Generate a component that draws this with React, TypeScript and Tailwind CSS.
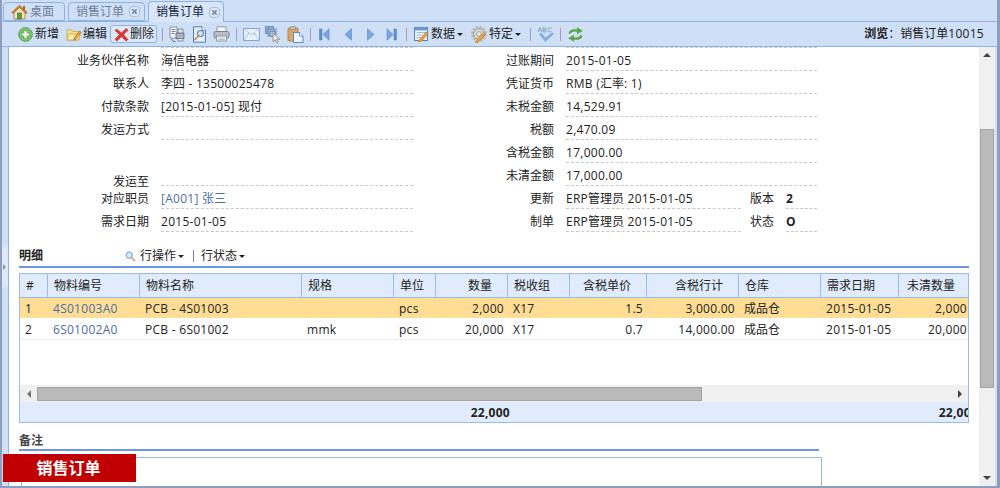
import React from "react";

const font = { fontFamily: '"Open Sans","Noto Sans CJK SC",sans-serif' };

const T = ({ v }: { v: string }) => (
  <>
    {v.split(/([\u4e00-\u9fff：]+)/).map((p, i) =>
      i % 2 === 1 ? <span key={i}>{p}</span> : <span key={i} className="tracking-[0.27px]">{p}</span>
    )}
  </>
);

const Home = () => (
  <svg width="17" height="16" viewBox="0 0 17 16" className="mr-[2px] shrink-0">
    <path d="M3 8v7h11V8L8.5 3z" fill="#f3e3b8" stroke="#a8763a" strokeWidth="0.8" />
    <rect x="6.5" y="9" width="4" height="6" fill="#5f9a3c" stroke="#3d7326" strokeWidth="0.6" />
    <path d="M0.8 8.5 8.5 1.2l7.7 7.3-1.2 1-6.5-6-6.5 6z" fill="#d9832c" stroke="#96561b" strokeWidth="0.6" />
    <rect x="12" y="2" width="2" height="4" fill="#b06a26" />
  </svg>
);
const Close = () => (
  <svg width="11" height="11" viewBox="0 0 11 11" className="shrink-0">
    <rect x="0.5" y="0.5" width="10" height="10" rx="3" fill="#dbe6f6" stroke="#a7bbd9" />
    <path d="M3.3 3.3l4.4 4.4M7.700 3.300 3.300 7.700" stroke="#71859f" strokeWidth="1.600" />
  </svg>
);
const Add = () => (
  <svg width="15" height="15" viewBox="0 0 15 15" className="shrink-0">
    <circle cx="7.5" cy="7.5" r="6.8" fill="#8cc97c" stroke="#4f9a44" />
    <circle cx="7.5" cy="7.5" r="5" fill="#6fb665" />
    <path d="M7.5 4v7M4 7.5h7" stroke="#fff" strokeWidth="2.2" />
  </svg>
);
const Edit = () => (
  <svg width="16" height="15" viewBox="0 0 16 15" className="shrink-0">
    <path d="M1 3h5l1 1.5h6V13H1z" fill="#f5e08e" stroke="#c9a548" strokeWidth="0.8" />
    <path d="M1 13l2-6h11.5L12.500 13z" fill="#fbeeb0" stroke="#c9a548" strokeWidth="0.8" />
    <path d="M8 11l5.500-7 1.700 1.300L9.800 12.300 7.700 13z" fill="#e89a3c" stroke="#a86a20" strokeWidth="0.6" />
  </svg>
);
const Del = () => (
  <svg width="15" height="15" viewBox="0 0 15 15" className="shrink-0">
    <path d="M2.500 2 7.500 6 12 1.500l2 1.500-4.500 4.700L14 12.500 12 14 7.500 9.500 3 14l-2-1.800 4.500-4.700L1 3.500z" fill="#e2352e" stroke="#c7241f" strokeWidth="0.6" strokeLinejoin="round" />
  </svg>
);
const Export = () => (
  <svg width="17" height="17" viewBox="0 0 17 17" className="shrink-0">
    <path d="M1 1h7v11H1z" fill="#f3f6fb" stroke="#6f7a8c" strokeWidth="0.8" />
    <path d="M2.500 3.500h4M2.500 5.500h4M2.500 7.500h3" stroke="#5b6778" strokeWidth="0.8" />
    <path d="M7 7h8v5.500H7z" fill="#aab3c0" stroke="#606a78" strokeWidth="0.8" />
    <path d="M9 3h5v4H9z" fill="#dde2ea" stroke="#6f7a8c" strokeWidth="0.8" />
    <path d="M9 12.500h5v2.500H9z" fill="#eef1f5" stroke="#6f7a8c" strokeWidth="0.8" />
    <path d="M2.500 13c.5 2 2 2.800 4 2.500" fill="none" stroke="#4c6fa0" strokeWidth="1" />
  </svg>
);
const Preview = () => (
  <svg width="15" height="17" viewBox="0 0 15 17" className="shrink-0">
    <path d="M1.500 .8h8.500l3.500 3.500v11.900h-12z" fill="#e4eefb" stroke="#4f7fc0" />
    <path d="M10 .8v3.500h3.500" fill="#fff" stroke="#4f7fc0" strokeWidth="0.8" />
    <circle cx="8.500" cy="7.500" r="3" fill="#cfe5fb" stroke="#6d7f92" strokeWidth="1.100" />
    <path d="M6.300 10 2.500 14" stroke="#d98a2a" strokeWidth="1.800" />
  </svg>
);
const Printer = () => (
  <svg width="17" height="16" viewBox="0 0 17 16" className="shrink-0">
    <path d="M4 .8h9v5H4z" fill="#f4f6fa" stroke="#7e8896" strokeWidth="0.8" />
    <rect x="1" y="5.500" width="15" height="6.500" rx="1.500" fill="#b7bec9" stroke="#6b7482" strokeWidth="0.8" />
    <path d="M3.500 10h10v5h-10z" fill="#f4f6fa" stroke="#7e8896" strokeWidth="0.8" />
    <path d="M5 12h7M5 13.500h7" stroke="#a5adb8" strokeWidth="0.7" />
  </svg>
);
const Mail = () => (
  <svg width="17" height="13" viewBox="0 0 17 13" className="shrink-0">
    <rect x="0.500" y="0.500" width="16" height="12" fill="#e9f1fc" stroke="#7ea6dc" />
    <path d="M.5.500 8.500 7l8-6.500M.5 12.500l5.500-7.500M16.500 12.500 11 5" fill="none" stroke="#a3c1ea" />
  </svg>
);
const Windows = () => (
  <svg width="16" height="17" viewBox="0 0 16 17" className="shrink-0">
    <rect x="0.500" y="0.500" width="8" height="7" fill="#8fa9cf" stroke="#7390bb" />
    <rect x="3" y="3" width="8" height="7" fill="#9db5d8" stroke="#7390bb" />
    <rect x="5" y="5.500" width="5" height="5" fill="#aac0df" stroke="#7390bb" />
    <path d="M8 7v9l2.200-2.200 1.500 3 1.500-.7-1.500-2.900H15z" fill="#ececec" stroke="#858585" strokeWidth="0.800" strokeLinejoin="round" />
  </svg>
);
const Paste = () => (
  <svg width="17" height="17" viewBox="0 0 17 17" className="shrink-0">
    <rect x="1" y="2" width="10" height="13" rx="1" fill="#dca766" stroke="#a9742f" strokeWidth="0.800" />
    <rect x="3.500" y="0.600" width="5" height="3" rx="0.800" fill="#c9c9c9" stroke="#7e7e7e" strokeWidth="0.700" />
    <path d="M6.500 6.500h6l3.500 3.500v6.500H6.500z" fill="#eef4fd" stroke="#4f7fc0" strokeWidth="0.900" />
    <path d="M12.500 6.500V10H16" fill="#fff" stroke="#4f7fc0" strokeWidth="0.800" />
  </svg>
);
const Nav = ({ dir, bar }: { dir: "l" | "r"; bar?: boolean }) => (
  <svg width="11" height="13" viewBox="0 0 11 13" className="shrink-0">
    {dir === "l" ? (
      <>
        {bar && <rect x="0.500" y="1" width="2.500" height="11" fill="#5f8fd0" stroke="#4d7cbc" strokeWidth="0.500" />}
        <path d={bar ? "M10 .8v11.400L4 6.500z" : "M8.500.8v11.400L2 6.500z"} fill="#7ba6df" stroke="#5d8ccb" strokeWidth="0.700" />
      </>
    ) : (
      <>
        {bar && <rect x="8" y="1" width="2.500" height="11" fill="#5f8fd0" stroke="#4d7cbc" strokeWidth="0.500" />}
        <path d={bar ? "M1 .8v11.400L7 6.500z" : "M2.500.8v11.400L9 6.500z"} fill="#7ba6df" stroke="#5d8ccb" strokeWidth="0.700" />
      </>
    )}
  </svg>
);
const DataIcon = () => (
  <svg width="15" height="15" viewBox="0 0 15 15" className="shrink-0">
    <rect x="0.500" y="0.500" width="13" height="13" fill="#f2f6fc" stroke="#4f7fc0" />
    <rect x="0.500" y="0.500" width="13" height="3" fill="#6f9bd6" />
    <path d="M2.500 5.500h9M2.500 8h5M2.500 10.500h4" stroke="#9db9df" />
    <path d="M5 13l7-8 2 1.700-7 8-3 .5z" fill="#efa13c" stroke="#b06f1f" strokeWidth="0.600" />
  </svg>
);
const Gear = () => (
  <svg width="17" height="17" viewBox="0 0 17 17" className="shrink-0">
    <circle cx="8" cy="8" r="5.500" fill="#d6d6d2" stroke="#9b9b92" />
    <circle cx="8" cy="8" r="7" fill="none" stroke="#b4b4ac" strokeWidth="2" strokeDasharray="2.200 1.500" />
    <circle cx="8" cy="8" r="2.300" fill="#eeeeea" stroke="#9b9b92" strokeWidth="0.800" />
    <path d="M5 15l7.500-8.500 2 1.700L7 16.500l-2.500.5z" fill="#efa83f" stroke="#b06f1f" strokeWidth="0.600" />
  </svg>
);
const Abc = () => (
  <svg width="17" height="15" viewBox="0 0 17 15" className="shrink-0">
    <path d="M1 5l2-4.500L5 5M1.700 3.500h2.600M6 .7h2c1.500 0 1.500 2-.2 2H6zm0 2h2.200c1.600 0 1.600 2.300 0 2.300H6zM14.500 1.300c-2-1.300-3.600 0-3.600 1.500s1.600 2.800 3.600 1.500" fill="none" stroke="#7fa6c9" strokeWidth="0.900" />
    <path d="M2.500 7l2-.8 3.700 5L15 5.800l1.500 1L8.300 14.500z" fill="#7fb3e6" stroke="#5d93cc" strokeWidth="0.500" />
  </svg>
);
const Refresh = () => (
  <svg width="17" height="15" viewBox="0 0 17 15" className="shrink-0">
    <path d="M2.500 6.500C3.500 3.800 6.800 3 10.500 3.600" fill="none" stroke="#58a846" strokeWidth="2.400" />
    <path d="M10 .2 15.800 3.800 10 7.200z" fill="#58a846" />
    <path d="M14.500 8.500c-1 2.700-4.300 3.500-8 2.900" fill="none" stroke="#58a846" strokeWidth="2.400" />
    <path d="M7 14.800 1.200 11.200 7 7.800z" fill="#58a846" />
  </svg>
);
const Caret = ({ className = "" }: { className?: string }) => (
  <span className={`inline-block w-0 h-0 border-x-[3px] border-x-transparent border-t-[3px] border-t-[#222] ${className}`} />
);
const Sep = ({ className = "" }: { className?: string }) => <span className={`w-px h-[13px] bg-[#a899c4] shrink-0 ${className}`} />;

const Tab = ({ label, active, close, icon, className = "" }: { label: string; active?: boolean; close?: boolean; icon?: React.ReactNode; className?: string }) => (
  <div
    className={`flex items-center border border-[#8db2e3] rounded-t-[4px] ${
      active ? "h-[21px] border-b-0 bg-[#d8e6f8] text-[#15263f] z-10 -mb-px" : "h-[19px] bg-[#cfdff5] text-[#6f7f96]"
    } ${className}`}
  >
    {icon}
    <span className="leading-none">{label}</span>
    {close && <span className="ml-[5px]"><Close /></span>}
  </div>
);

const Row = ({ label, value, blue, line = true, lw = "w-[141px]" }: { label: string; value?: string; blue?: boolean; line?: boolean; lw?: string }) => (
  <div className="flex h-[23px]">
    <div className={`${lw} shrink-0 pt-[3px] text-right text-[#222] leading-[20px]`}>{label}</div>
    <div className={`ml-[12px] flex-1 pt-[3px] leading-[20px] ${line ? "border-b border-dashed border-[#c8c8c8]" : ""} ${blue ? "text-[#4a6ea9]" : "text-[#222]"}`}>
      {value && <T v={value} />}
    </div>
  </div>
);

const columns = [
  { w: "w-[28px] min-w-[28px]", t: "#", a: "l" },
  { w: "w-[92px] min-w-[92px]", t: "物料编号", a: "l" },
  { w: "w-[162px] min-w-[162px]", t: "物料名称", a: "l" },
  { w: "w-[92px] min-w-[92px]", t: "规格", a: "l" },
  { w: "w-[42px] min-w-[42px]", t: "单位", a: "l" },
  { w: "w-[72px] min-w-[72px]", t: "数量", a: "r" },
  { w: "w-[62px] min-w-[62px]", t: "税收组", a: "l" },
  { w: "w-[77px] min-w-[77px]", t: "含税单价", a: "r" },
  { w: "w-[92px] min-w-[92px]", t: "含税行计", a: "r" },
  { w: "w-[82px] min-w-[82px]", t: "仓库", a: "l" },
  { w: "w-[78px] min-w-[78px]", t: "需求日期", a: "l" },
  { w: "w-[72px] min-w-[72px]", t: "未清数量", a: "r" },
];

const rows = [
  ["1", "4S01003A0", "PCB - 4S01003", "", "pcs", "2,000", "X17", "1.5", "3,000.00", "成品仓", "2015-01-05", "2,000"],
  ["2", "6S01002A0", "PCB - 6S01002", "mmk", "pcs", "20,000", "X17", "0.7", "14,000.00", "成品仓", "2015-01-05", "20,000"],
];

export default function App() {
  return (
    <div style={font} className="relative w-[1000px] h-[488px] overflow-hidden bg-[#cfdff5] text-[12px] text-[#222] flex flex-col border-l-2 border-r-[3px] border-b-2 border-[#8c9dbd]">
      {/* Tabs */}
      <div className="h-[22px] shrink-0 flex items-end gap-[3px] pl-px border-b border-[#8db2e3]">
        <Tab label="桌面" icon={<Home />} className="w-[62px] pl-[7px]" />
        <Tab label="销售订单" close className="w-[77px] pl-[7px]" />
        <Tab label="销售订单" active close className="w-[76px] pl-[7px]" />
      </div>
      {/* Toolbar */}
      <div className="h-[25px] shrink-0 flex items-center pl-[16px] pr-[13px] border-b border-[#8db2e3]">
        <Add />
        <span className="ml-[2px]">新增</span>
        <span className="ml-[7px]"><Edit /></span>
        <span className="ml-[1px]">编辑</span>
        <div className="ml-[3px] h-[18px] w-[47px] flex items-center pl-[3px] border border-[#8db2e3] rounded-[3px] bg-[#dde9f9]">
          <Del />
          <span className="ml-[1px]">删除</span>
        </div>
        <Sep className="ml-[5px]" />
        <span className="ml-[6px]"><Export /></span>
        <span className="ml-[6px]"><Preview /></span>
        <span className="ml-[6px]"><Printer /></span>
        <Sep className="ml-[6px]" />
        <span className="ml-[6px]"><Mail /></span>
        <span className="ml-[5px]"><Windows /></span>
        <span className="ml-[6px]"><Paste /></span>
        <Sep className="ml-[6px]" />
        <span className="ml-[8px]"><Nav dir="l" bar /></span>
        <span className="ml-[13px]"><Nav dir="l" /></span>
        <span className="ml-[11px]"><Nav dir="r" /></span>
        <span className="ml-[10px]"><Nav dir="r" bar /></span>
        <Sep className="ml-[9px]" />
        <span className="ml-[7px]"><DataIcon /></span>
        <span className="ml-[2px]">数据</span>
        <Caret className="ml-[2px]" />
        <span className="ml-[8px]"><Gear /></span>
        <span className="ml-[1px]">特定</span>
        <Caret className="ml-[2px]" />
        <Sep className="ml-[9px]" />
        <span className="ml-[6px]"><Abc /></span>
        <Sep className="ml-[6px]" />
        <span className="ml-[6px]"><Refresh /></span>
        <div className="ml-auto"><b className="font-bold">浏览</b><T v="：销售订单10015" /></div>
      </div>
      {/* Body */}
      <div className="flex-1 min-h-0 flex">
        <div className="w-[7px] shrink-0 border-r border-[#8db2e3] flex items-center justify-center">
          <div className="h-[40px] w-[6px] -ml-px bg-[#dfe8f6] flex items-center justify-center">
            <span className="w-0 h-0 border-y-[3px] border-y-transparent border-l-[3px] border-l-[#8e96a3]" />
          </div>
        </div>
        <div className="flex-1 min-w-0 bg-white overflow-hidden">
          {/* Form */}
          <div className="flex h-[185px] w-[808px] pt-px">
            <div className="w-[404px] shrink-0">
              <div className="ml-[152px] h-px border-t border-dashed border-[#c8c8c8] -mt-px" />
              <Row lw="w-[140px]" label="业务伙伴名称" value="海信电器" />
              <Row lw="w-[140px]" label="联系人" value="李四 - 13500025478" />
              <Row lw="w-[140px]" label="付款条款" value="[2015-01-05] 现付" />
              <Row lw="w-[140px]" label="发运方式" />
              <div className="flex h-[46px]">
                <div className="w-[140px] shrink-0 pt-[32px] text-right leading-[20px]">发运至</div>
                <div className="ml-[12px] flex-1 border-b border-dashed border-[#c8c8c8]" />
              </div>
              <Row lw="w-[140px]" label="对应职员" value="[A001] 张三" blue />
              <Row lw="w-[140px]" label="需求日期" value="2015-01-05" />
            </div>
            <div className="flex-1">
              <div className="ml-[153px] h-px border-t border-dashed border-[#c8c8c8] -mt-px" />
              <Row label="过账期间" value="2015-01-05" />
              <Row label="凭证货币" value="RMB (汇率: 1)" />
              <Row label="未税金额" value="14,529.91" />
              <Row label="税额" value="2,470.09" />
              <Row label="含税金额" value="17,000.00" />
              <Row label="未清金额" value="17,000.00" />
              <div className="flex h-[23px]">
                <div className="w-[141px] shrink-0 pt-[3px] text-right leading-[20px]">更新</div>
                <div className="ml-[12px] w-[175px] pt-[3px] leading-[20px] border-b border-dashed border-[#c8c8c8]"><T v="ERP管理员 2015-01-05" /></div>
                <div className="ml-[9px] w-[36px] pt-[3px] leading-[20px]">版本</div>
                <div className="flex-1 pt-[3px] leading-[20px] font-bold border-b border-dashed border-[#c8c8c8]">2</div>
              </div>
              <div className="flex h-[23px]">
                <div className="w-[141px] shrink-0 pt-[3px] text-right leading-[20px]">制单</div>
                <div className="ml-[12px] w-[175px] pt-[3px] leading-[20px] border-b border-dashed border-[#c8c8c8]"><T v="ERP管理员 2015-01-05" /></div>
                <div className="ml-[9px] w-[36px] pt-[3px] leading-[20px]">状态</div>
                <div className="flex-1 pt-[3px] leading-[20px] font-bold border-b border-dashed border-[#c8c8c8]">O</div>
              </div>
            </div>
          </div>
          {/* Detail header */}
          <div className="ml-[10px] mt-[14px] w-[950px] h-[22px] flex items-center border-b-2 border-[#6c97e0]">
            <b className="font-bold">明细</b>
            <svg width="11" height="11" viewBox="0 0 11 11" className="ml-[82px] shrink-0">
              <circle cx="4.200" cy="4.200" r="3" fill="#dcebfb" stroke="#7ea6d8" strokeWidth="1.200" />
              <path d="M6.500 6.500 10 10" stroke="#c9a45c" strokeWidth="1.600" />
            </svg>
            <span className="ml-[4px]">行操作</span>
            <Caret className="ml-[2px]" />
            <span className="ml-[9px] w-px h-[12px] bg-[#8a7fa8]" />
            <span className="ml-[7px]">行状态</span>
            <Caret className="ml-[2px]" />
          </div>
          {/* Grid */}
          <div className="ml-[10px] mt-[5px] w-[950px] h-[150px] border border-[#99bbe8] overflow-hidden flex flex-col">
            <div className="h-[24px] shrink-0 flex bg-[#e0ecfd] border-b border-[#99bbe8]">
              {columns.map((c, i) => (
                <div key={i} className={`${c.w} h-full pt-px leading-[21px] border-r border-[#99bbe8] ${c.a === "r" ? "text-right pr-[15px]" : "pl-[6px]"}`}>
                  {c.t}
                </div>
              ))}
            </div>
            <div className="h-[87px] shrink-0">
              {rows.map((r, ri) => (
                <div key={ri} className={`flex h-[21px] border-b ${ri === 0 ? "bg-[#ffdd94] border-white" : "bg-white border-[#ededed]"}`}>
                  {r.map((v, i) => (
                    <div key={i} className={`${columns[i].w} leading-[21px] whitespace-nowrap ${columns[i].a === "r" ? "text-right pr-[4px]" : "pl-[5px]"} ${i === 1 ? "text-[#4a6ea9]" : ""}`}>
                      <T v={v} />
                    </div>
                  ))}
                </div>
              ))}
            </div>
            <div className="h-[17px] shrink-0 bg-[#f0f0f0] flex items-center">
              <div className="w-[17px] flex justify-center">
                <span className="w-0 h-0 border-y-[4px] border-y-transparent border-r-[4px] border-r-[#777]" />
              </div>
              <div className="w-[665px] h-[14px] bg-[#bababa] border border-[#a3a3a3]" />
              <div className="ml-auto w-[17px] flex justify-center">
                <span className="w-0 h-0 border-y-[4px] border-y-transparent border-l-[4px] border-l-[#444]" />
              </div>
            </div>
            <div className="flex-1 flex bg-[#e0ecfd] font-bold leading-[21px] overflow-hidden">
              <div className="w-[490px] min-w-[490px] text-right"><T v="22,000" /></div>
              <div className="w-[480px] min-w-[480px] text-right whitespace-nowrap pr-[12px]"><T v="22,000" /></div>
            </div>
          </div>
          {/* Notes */}
          <div className="ml-[10px] mt-[10px] w-[800px] h-[18px] border-b-2 border-[#6c97e0] leading-[16px] font-semibold text-[#444]">备注</div>
          <div className="ml-[12px] mt-[6px] w-[801px] h-[40px] border border-b-0 border-[#99bbe8]" />
        </div>
        {/* Scrollbar */}
        <div className="w-[16px] shrink-0 bg-[#f0f0f0] flex flex-col items-center">
          <span className="mt-[6px] w-0 h-0 border-x-[4px] border-x-transparent border-b-[4px] border-b-[#444]" />
          <div className="mt-[72px] w-[14px] h-[259px] bg-[#bababa] border border-[#a3a3a3]" />
          <span className="mt-auto mb-[6px] w-0 h-0 border-x-[4px] border-x-transparent border-t-[4px] border-t-[#444]" />
        </div>
        <div className="w-[2px] shrink-0" />
      </div>
      {/* Title badge */}
      <div className="absolute left-[1px] top-[454px] w-[133px] h-[28px] pr-[2px] bg-[#c00000] text-white text-[16px] font-bold flex items-center justify-center">
        销售订单
      </div>
    </div>
  );
}
